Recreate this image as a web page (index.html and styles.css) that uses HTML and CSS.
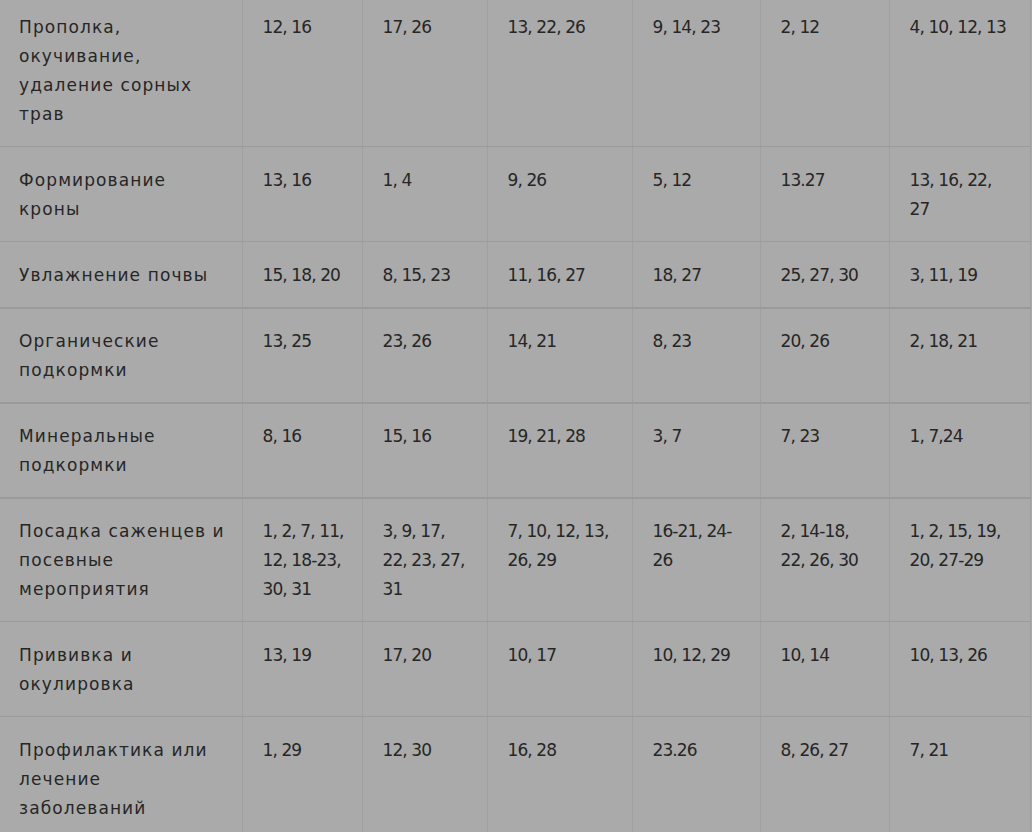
FILE: index.html
```html
<!DOCTYPE html>
<html lang="ru">
<head>
<meta charset="utf-8">
<title>Календарь работ</title>
<link rel="stylesheet" href="styles.css">
</head>
<body>
<div class="page">
<table class="schedule">
<colgroup>
<col class="c-work"><col class="c-m1"><col class="c-m2"><col class="c-m3"><col class="c-m4"><col class="c-m5"><col class="c-m6">
</colgroup>
<tbody>
<tr><td>Прополка,<br>окучивание,<br>удаление сорных<br>трав</td><td>12, 16</td><td>17, 26</td><td>13, 22, 26</td><td>9, 14, 23</td><td>2, 12</td><td>4, 10, 12, 13</td></tr>
<tr><td>Формирование<br>кроны</td><td>13, 16</td><td>1, 4</td><td>9, 26</td><td>5, 12</td><td>13.27</td><td>13, 16, 22,<br>27</td></tr>
<tr><td>Увлажнение почвы</td><td>15, 18, 20</td><td>8, 15, 23</td><td>11, 16, 27</td><td>18, 27</td><td>25, 27, 30</td><td>3, 11, 19</td></tr>
<tr class="thick"><td>Органические<br>подкормки</td><td>13, 25</td><td>23, 26</td><td>14, 21</td><td>8, 23</td><td>20, 26</td><td>2, 18, 21</td></tr>
<tr class="thick"><td>Минеральные<br>подкормки</td><td>8, 16</td><td>15, 16</td><td>19, 21, 28</td><td>3, 7</td><td>7, 23</td><td>1, 7,24</td></tr>
<tr class="thick"><td>Посадка саженцев и<br>посевные<br>мероприятия</td><td>1, 2, 7, 11,<br>12, 18-23,<br>30, 31</td><td>3, 9, 17,<br>22, 23, 27,<br>31</td><td>7, 10, 12, 13,<br>26, 29</td><td>16-21, 24-<br>26</td><td>2, 14-18,<br>22, 26, 30</td><td>1, 2, 15, 19,<br>20, 27-29</td></tr>
<tr><td>Прививка и<br>окулировка</td><td>13, 19</td><td>17, 20</td><td>10, 17</td><td>10, 12, 29</td><td>10, 14</td><td>10, 13, 26</td></tr>
<tr><td>Профилактика или<br>лечение<br>заболеваний</td><td>1, 29</td><td>12, 30</td><td>16, 28</td><td>23.26</td><td>8, 26, 27</td><td>7, 21</td></tr>
</tbody>
</table>
</div>
</body>
</html>
```

FILE: styles.css
```css
html, body {
  margin: 0;
  padding: 0;
  background: #aaaaaa;
  overflow: hidden;
}

.page {
  width: 1032px;
  height: 832px;
  overflow: hidden;
  background: #aaaaaa;
}

.schedule {
  margin-top: -6px;
  margin-left: -1px;
  width: 1031px;
  border-collapse: collapse;
  table-layout: fixed;
  font-family: "DejaVu Sans", sans-serif;
  font-size: 17px;
  line-height: 29px;
  color: #262626;
  letter-spacing: -0.9px;
}

.c-work { width: 243px; }
.c-m1 { width: 120px; }
.c-m2 { width: 125px; }
.c-m3 { width: 145px; }
.c-m4 { width: 128px; }
.c-m5 { width: 129px; }
.c-m6 { width: 141px; }

.schedule td {
  vertical-align: top;
  padding: 19px 20px 17px 20px;
  border-left: 1px solid #a0a0a0;
  border-right: 1px solid #a0a0a0;
  border-top: 1px solid #9b9b9b;
  border-bottom: 1px solid #9b9b9b;
  white-space: nowrap;
}

.schedule td:first-child {
  border-left: none;
  letter-spacing: 1.1px;
}

.schedule tr:first-child td {
  border-top: none;
}

.schedule tr.thick td {
  border-top: 2px solid #9a9a9a;
  padding-top: 18px;
}
```
